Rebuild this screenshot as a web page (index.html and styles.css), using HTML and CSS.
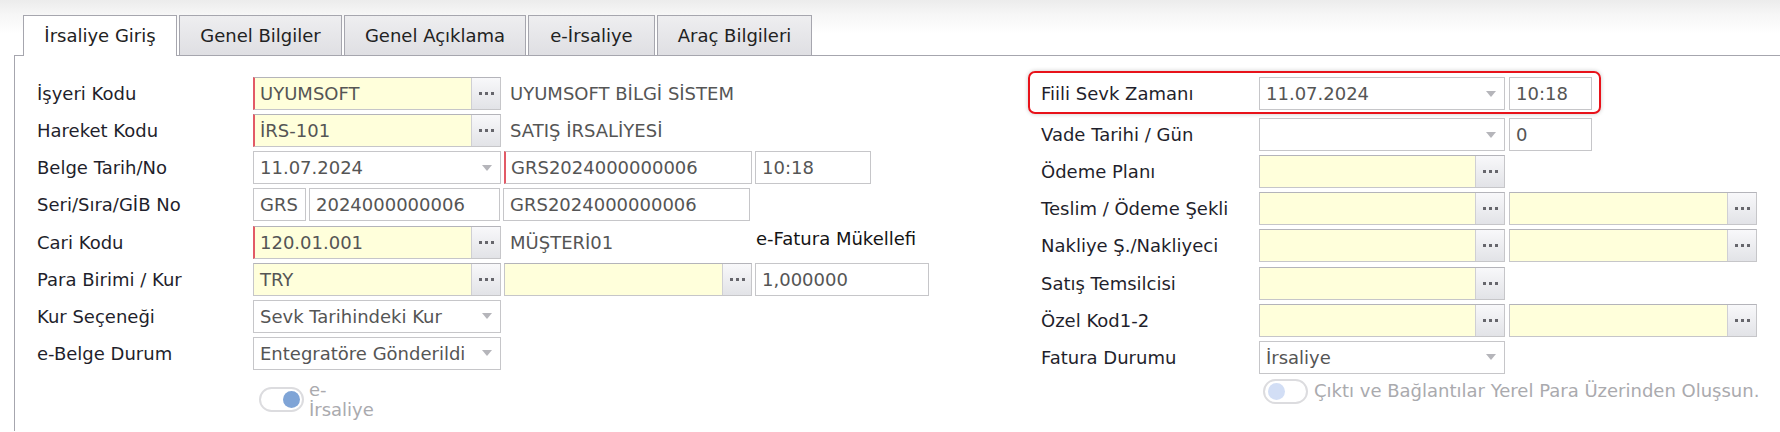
FILE: index.html
```html
<!DOCTYPE html>
<html lang="tr">
<head>
<meta charset="utf-8">
<title>İrsaliye Giriş</title>
<link rel="stylesheet" href="styles.css">
</head>
<body>
<div class="page">
  <div class="tabs">
    <div class="tab active t1">İrsaliye Giriş</div>
    <div class="tab t2">Genel Bilgiler</div>
    <div class="tab t3">Genel Açıklama</div>
    <div class="tab t4">e-İrsaliye</div>
    <div class="tab t5">Araç Bilgileri</div>
  </div>
  <div class="panel">
    <div class="form">
      <div class="col left">
        <div class="row">
          <div class="lbl">İşyeri Kodu</div>
          <div class="ctl">
            <div class="fld yel req w248"><span class="val">UYUMSOFT</span><span class="btn"></span></div>
            <span class="desc">UYUMSOFT BİLGİ SİSTEM</span>
          </div>
        </div>
        <div class="row">
          <div class="lbl">Hareket Kodu</div>
          <div class="ctl">
            <div class="fld yel req w248"><span class="val">İRS-101</span><span class="btn"></span></div>
            <span class="desc">SATIŞ İRSALİYESİ</span>
          </div>
        </div>
        <div class="row">
          <div class="lbl">Belge Tarih/No</div>
          <div class="ctl">
            <div class="fld w248"><span class="val">11.07.2024</span><span class="arr"></span></div>
            <div class="fld req w248"><span class="val">GRS2024000000006</span></div>
            <div class="fld w116"><span class="val">10:18</span></div>
          </div>
        </div>
        <div class="row">
          <div class="lbl">Seri/Sıra/GİB No</div>
          <div class="ctl">
            <div class="fld w53"><span class="val">GRS</span></div>
            <div class="fld w191"><span class="val">2024000000006</span></div>
            <div class="fld w247"><span class="val">GRS2024000000006</span></div>
          </div>
        </div>
        <div class="row">
          <div class="lbl">Cari Kodu</div>
          <div class="ctl">
            <div class="fld yel req w248"><span class="val">120.01.001</span><span class="btn"></span></div>
            <span class="desc fixed">MÜŞTERİ01</span>
            <span class="note">e-Fatura Mükellefi</span>
          </div>
        </div>
        <div class="row">
          <div class="lbl">Para Birimi / Kur</div>
          <div class="ctl">
            <div class="fld yel w248"><span class="val">TRY</span><span class="btn"></span></div>
            <div class="fld yel w248"><span class="val"></span><span class="btn"></span></div>
            <div class="fld w174"><span class="val">1,000000</span></div>
          </div>
        </div>
        <div class="row">
          <div class="lbl">Kur Seçeneği</div>
          <div class="ctl">
            <div class="fld w248"><span class="val">Sevk Tarihindeki Kur</span><span class="arr"></span></div>
          </div>
        </div>
        <div class="row">
          <div class="lbl">e-Belge Durum</div>
          <div class="ctl">
            <div class="fld w248"><span class="val">Entegratöre Gönderildi</span><span class="arr"></span></div>
          </div>
        </div>
        <div class="trow trow-left">
          <div class="tgl on"><span class="knob"></span></div>
          <span class="tlbl narrow">e-İrsaliye</span>
        </div>
      </div>

      <div class="col right">
        <div class="row hl">
          <div class="lbl">Fiili Sevk Zamanı</div>
          <div class="ctl">
            <div class="fld w246"><span class="val">11.07.2024</span><span class="arr"></span></div>
            <div class="fld w83"><span class="val">10:18</span></div>
          </div>
        </div>
        <div class="row">
          <div class="lbl">Vade Tarihi / Gün</div>
          <div class="ctl">
            <div class="fld w246"><span class="val"></span><span class="arr"></span></div>
            <div class="fld w83"><span class="val">0</span></div>
          </div>
        </div>
        <div class="row">
          <div class="lbl">Ödeme Planı</div>
          <div class="ctl">
            <div class="fld yel w246"><span class="val"></span><span class="btn"></span></div>
          </div>
        </div>
        <div class="row">
          <div class="lbl">Teslim / Ödeme Şekli</div>
          <div class="ctl">
            <div class="fld yel w246"><span class="val"></span><span class="btn"></span></div>
            <div class="fld yel w248"><span class="val"></span><span class="btn"></span></div>
          </div>
        </div>
        <div class="row">
          <div class="lbl">Nakliye Ş./Nakliyeci</div>
          <div class="ctl">
            <div class="fld yel w246"><span class="val"></span><span class="btn"></span></div>
            <div class="fld yel w248"><span class="val"></span><span class="btn"></span></div>
          </div>
        </div>
        <div class="row">
          <div class="lbl">Satış Temsilcisi</div>
          <div class="ctl">
            <div class="fld yel w246"><span class="val"></span><span class="btn"></span></div>
          </div>
        </div>
        <div class="row">
          <div class="lbl">Özel Kod1-2</div>
          <div class="ctl">
            <div class="fld yel w246"><span class="val"></span><span class="btn"></span></div>
            <div class="fld yel w248"><span class="val"></span><span class="btn"></span></div>
          </div>
        </div>
        <div class="row">
          <div class="lbl">Fatura Durumu</div>
          <div class="ctl">
            <div class="fld w246"><span class="val">İrsaliye</span><span class="arr"></span></div>
          </div>
        </div>
        <div class="trow trow-right">
          <div class="tgl off"><span class="knob"></span></div>
          <span class="tlbl">Çıktı ve Bağlantılar Yerel Para Üzerinden Oluşsun.</span>
        </div>
      </div>
    </div>
  </div>
</div>
</body>
</html>
```

FILE: styles.css
```css
html, body {
  margin: 0;
  padding: 0;
}

body {
  width: 1780px;
  height: 432px;
  overflow: hidden;
  background: #fff linear-gradient(#ececec 0, #f6f6f6 14px, #ffffff 34px) no-repeat;
  background-size: 100% 40px;
  font-family: "DejaVu Sans", Verdana, sans-serif;
  font-size: 18px;
  color: #1f1f2c;
}

.page {
  padding-top: 15px;
  height: 417px;
  overflow: hidden;
}

/* Tabs */
.tabs {
  display: flex;
  align-items: flex-start;
  gap: 2px;
  margin-left: 23px;
  margin-bottom: -1px;
  position: relative;
  z-index: 1;
}

.tab {
  box-sizing: border-box;
  height: 40px;
  border: 1px solid #a6a6ae;
  border-bottom: none;
  background: linear-gradient(#eeeef0, #dfdfe3);
  display: flex;
  align-items: center;
  justify-content: center;
  line-height: 1;
  color: #222;
  white-space: nowrap;
}

.tab.active {
  height: 41px;
  background: #fff;
}

.t1 { width: 154px; }
.t2 { width: 163px; }
.t3 { width: 182px; }
.t4 { width: 127px; }
.t5 { width: 155px; }

/* Panel */
.panel {
  margin-left: 14px;
  border-left: 1px solid #a6a6ae;
  border-top: 1px solid #a6a6ae;
  height: 376px;
  box-sizing: border-box;
}

.form {
  display: flex;
  padding: 15px 0 0 22px;
}

.col.left {
  width: 991px;
  flex: none;
  padding-top: 6px;
}

.col.right {
  width: 573px;
  flex: none;
}

.row {
  display: flex;
  align-items: center;
  height: 33px;
  margin-bottom: 4.14px;
}

.lbl {
  width: 216px;
  flex: none;
  white-space: nowrap;
}

.right .row {
  padding-left: 13px;
}

.right .lbl {
  width: 218px;
}

.right .row.hl {
  box-sizing: content-box;
  width: 551px;
  padding: 4px 7px 2px 11px;
  border: 2px solid #e8121a;
  border-radius: 7px;
  box-shadow: 0 0 4px rgba(0, 0, 0, 0.22);
  margin-bottom: 4px;
}

.ctl {
  display: flex;
  align-items: center;
  gap: 3px;
  height: 33px;
}

.right .ctl {
  gap: 4px;
}

/* Fields */
.fld {
  box-sizing: border-box;
  height: 33px;
  border: 1px solid #c6c6c9;
  background: #fff;
  display: flex;
  align-items: stretch;
  flex: none;
}

.fld.yel {
  background: #ffffdb;
  border-top-color: #b4b4ba;
}

.fld.req {
  border-left: 2px solid #e25a66;
}

.val {
  flex: 1;
  min-width: 0;
  padding-left: 6px;
  color: #555;
  white-space: nowrap;
  overflow: hidden;
  display: flex;
  align-items: center;
}

.fld.req .val {
  padding-left: 5px;
}

.btn {
  width: 28px;
  flex: none;
  border-left: 1px solid #cfcfd4;
  background: linear-gradient(#f8f8fa, #e2e3e7);
  display: flex;
  align-items: center;
  justify-content: center;
}

.btn::before {
  content: "";
  width: 3px;
  height: 3px;
  background: #66666c;
  box-shadow: -6px 0 0 #66666c, 6px 0 0 #66666c;
}

.arr {
  flex: none;
  align-self: center;
  width: 0;
  height: 0;
  border-left: 5px solid transparent;
  border-right: 5px solid transparent;
  border-top: 6px solid #b5b5ba;
  margin-right: 8px;
  margin-left: 4px;
}

.w53 { width: 53px; }
.w83 { width: 83px; }
.w116 { width: 116px; }
.w174 { width: 174px; }
.w191 { width: 191px; }
.w246 { width: 246px; }
.w247 { width: 247px; }
.w248 { width: 248px; }

.desc {
  margin-left: 6px;
  color: #555;
  white-space: nowrap;
}

.desc.fixed {
  width: 243px;
}

.note {
  color: #141414;
  white-space: nowrap;
  margin-top: -8px;
}

/* Toggles */
.trow {
  display: flex;
  align-items: center;
}

.trow-left {
  margin-top: 10px;
  padding-left: 222px;
}

.trow-right {
  margin-top: 5px;
  padding-left: 235px;
}

.tgl {
  box-sizing: border-box;
  width: 45px;
  height: 25px;
  border: 2px solid #dcdcdf;
  border-radius: 13px;
  position: relative;
  flex: none;
}

.knob {
  position: absolute;
  top: 2px;
  width: 17px;
  height: 17px;
  border-radius: 50%;
}

.tgl.on .knob {
  right: 2px;
  background: #7fa4d6;
}

.tgl.off .knob {
  left: 3px;
  background: #d2def5;
}

.tlbl {
  margin-left: 6px;
  color: #aaaaae;
  line-height: 20px;
  white-space: nowrap;
}

.tlbl.narrow {
  white-space: normal;
  width: 60px;
  margin-left: 5px;
}
```
